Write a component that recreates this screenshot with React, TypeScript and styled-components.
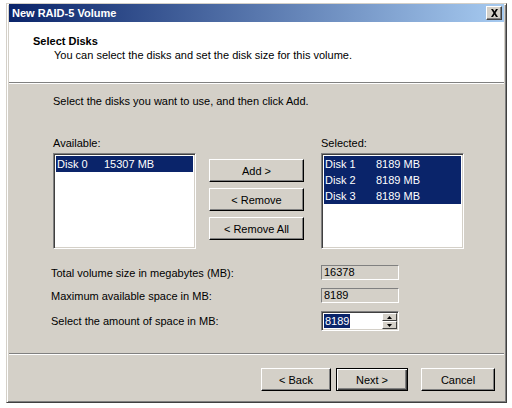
import React from 'react';
import styled, { createGlobalStyle } from 'styled-components';

const GlobalStyle = createGlobalStyle`
  html, body {
    margin: 0;
    padding: 0;
    background: #ffffff;
  }
  body {
    font-family: Tahoma, "Liberation Sans", Arial, sans-serif;
    font-size: 11px;
    color: #000000;
  }
`;

const available = [{ name: 'Disk 0', size: '15307 MB' }];
const selected = [
  { name: 'Disk 1', size: '8189 MB' },
  { name: 'Disk 2', size: '8189 MB' },
  { name: 'Disk 3', size: '8189 MB' },
];

export default function App() {
  return (
    <>
      <GlobalStyle />
      <Window>
        <TitleBar>
          <TitleText>New RAID-5 Volume</TitleText>
          <CloseButton>
            <svg width="9" height="8" viewBox="0 0 9 8">
              <path d="M1 0h2l1.5 2.5L6 0h2L5.5 4 8 8H6L4.5 5.5 3 8H1l2.5-4z" fill="#000" />
            </svg>
          </CloseButton>
        </TitleBar>
        <Header>
          <HeaderTitle>Select Disks</HeaderTitle>
          <HeaderText>You can select the disks and set the disk size for this volume.</HeaderText>
        </Header>
        <Separator />
        <Body>
          <Intro>Select the disks you want to use, and then click Add.</Intro>
          <ListsRow>
            <ListColumn>
              <Label>Available:</Label>
              <ListBox>
                {available.map((d) => (
                  <ListItem key={d.name} $selected>
                    <DiskName>{d.name}</DiskName>
                    <span>{d.size}</span>
                  </ListItem>
                ))}
              </ListBox>
            </ListColumn>
            <ButtonColumn>
              <Button>Add &gt;</Button>
              <Button>&lt; Remove</Button>
              <Button>&lt; Remove All</Button>
            </ButtonColumn>
            <ListColumn $offset={17}>
              <Label>Selected:</Label>
              <ListBox>
                {selected.map((d) => (
                  <ListItem key={d.name} $selected>
                    <DiskName $wide>{d.name}</DiskName>
                    <span>{d.size}</span>
                  </ListItem>
                ))}
              </ListBox>
            </ListColumn>
          </ListsRow>
          <Fields>
            <FieldRow>
              <FieldLabel>Total volume size in megabytes (MB):</FieldLabel>
              <ReadOnlyBox>16378</ReadOnlyBox>
            </FieldRow>
            <FieldRow>
              <FieldLabel>Maximum available space in MB:</FieldLabel>
              <ReadOnlyBox>8189</ReadOnlyBox>
            </FieldRow>
            <FieldRow $tall>
              <FieldLabel>Select the amount of space in MB:</FieldLabel>
              <SpinEdit>
                <SpinValue>8189</SpinValue>
                <SpinButtons>
                  <SpinButton>
                    <svg width="5" height="3" viewBox="0 0 5 3">
                      <path d="M2.5 0L5 3H0z" fill="#000" />
                    </svg>
                  </SpinButton>
                  <SpinButton>
                    <svg width="5" height="3" viewBox="0 0 5 3">
                      <path d="M0 0h5L2.5 3z" fill="#000" />
                    </svg>
                  </SpinButton>
                </SpinButtons>
              </SpinEdit>
            </FieldRow>
          </Fields>
        </Body>
        <Separator />
        <Footer>
          <Button $w={70}>&lt; Back</Button>
          <Button $w={72} $default>Next &gt;</Button>
          <CancelGap />
          <Button $w={74}>Cancel</Button>
        </Footer>
      </Window>
    </>
  );
}

const Window = styled.div`
  margin: 3px 0 0 6px;
  width: 501px;
  height: 400px;
  box-sizing: border-box;
  background: #d4d0c8;
  border-top: 1px solid #d4d0c8;
  border-left: 1px solid #d4d0c8;
  border-right: 1px solid #404040;
  border-bottom: 1px solid #404040;
  box-shadow: inset 1px 1px 0 #ffffff, inset -1px -1px 0 #808080;
  padding: 0 2px 2px 2px;
  display: flex;
  flex-direction: column;
`;

const TitleBar = styled.div`
  height: 18px;
  background: linear-gradient(to right, #0a246a, #a6caf0);
  display: flex;
  align-items: center;
  justify-content: space-between;
  padding: 0 2px 0 3px;
`;

const TitleText = styled.span`
  color: #ffffff;
  font-weight: bold;
  font-size: 11px;
`;

const CloseButton = styled.div`
  width: 16px;
  height: 14px;
  box-sizing: border-box;
  background: #d4d0c8;
  border-top: 1px solid #ffffff;
  border-left: 1px solid #ffffff;
  border-right: 1px solid #404040;
  border-bottom: 1px solid #404040;
  box-shadow: inset -1px -1px 0 #808080;
  display: flex;
  align-items: center;
  justify-content: center;
`;

const Header = styled.div`
  background: #ffffff;
  height: 60px;
  box-sizing: border-box;
  padding: 12px 0 0 24px;
`;

const HeaderTitle = styled.div`
  font-weight: bold;
  font-size: 11px;
  line-height: 14px;
`;

const HeaderText = styled.div`
  padding-left: 21px;
  line-height: 14px;
`;

const Separator = styled.div`
  height: 1px;
  background: #808080;
  border-bottom: 1px solid #ffffff;
`;

const Body = styled.div`
  height: 269px;
  box-sizing: border-box;
  padding: 11px 0 0 42px;
  display: flex;
  flex-direction: column;
`;

const Intro = styled.div`
  padding-left: 2px;
  line-height: 13px;
`;

const ListsRow = styled.div`
  display: flex;
  margin-top: 29px;
  padding-left: 2px;
`;

const ListColumn = styled.div<{ $offset?: number }>`
  display: flex;
  flex-direction: column;
  margin-left: ${(p) => p.$offset ?? 0}px;
`;

const Label = styled.div`
  line-height: 13px;
  height: 13px;
  margin-bottom: 3px;
`;

const ListBox = styled.div`
  width: 143px;
  height: 96px;
  box-sizing: border-box;
  background: #ffffff;
  border-top: 1px solid #808080;
  border-left: 1px solid #808080;
  border-right: 1px solid #ffffff;
  border-bottom: 1px solid #ffffff;
  box-shadow: inset 1px 1px 0 #404040, inset -1px -1px 0 #d4d0c8;
  padding: 2px;
`;

const ListItem = styled.div<{ $selected?: boolean }>`
  display: flex;
  height: 16px;
  align-items: center;
  padding-left: 1px;
  background: ${(p) => (p.$selected ? '#0a246a' : 'transparent')};
  color: ${(p) => (p.$selected ? '#ffffff' : '#000000')};
  white-space: nowrap;
`;

const DiskName = styled.span<{ $wide?: boolean }>`
  width: ${(p) => (p.$wide ? 51 : 47)}px;
`;

const ButtonColumn = styled.div`
  display: flex;
  flex-direction: column;
  gap: 6px;
  margin: 22px 0 0 13px;
`;

const Button = styled.div<{ $w?: number; $default?: boolean }>`
  width: ${(p) => p.$w ?? 95}px;
  height: 23px;
  box-sizing: border-box;
  display: flex;
  align-items: center;
  justify-content: center;
  background: #d4d0c8;
  border-top: 1px solid ${(p) => (p.$default ? '#000000' : '#ffffff')};
  border-left: 1px solid ${(p) => (p.$default ? '#000000' : '#ffffff')};
  border-right: 1px solid #000000;
  border-bottom: 1px solid #000000;
  box-shadow: ${(p) =>
    p.$default
      ? 'inset 1px 1px 0 #ffffff, inset -1px -1px 0 #404040, inset -2px -2px 0 #808080'
      : 'inset -1px -1px 0 #808080'};
  white-space: nowrap;
`;

const Fields = styled.div`
  display: flex;
  flex-direction: column;
  margin-top: 16px;
  gap: 8px;
`;

const FieldRow = styled.div<{ $tall?: boolean }>`
  display: flex;
  align-items: center;
  height: ${(p) => (p.$tall ? 20 : 15)}px;
`;

const FieldLabel = styled.div`
  width: 270px;
`;

const ReadOnlyBox = styled.div`
  width: 78px;
  height: 15px;
  box-sizing: border-box;
  border-top: 1px solid #808080;
  border-left: 1px solid #808080;
  border-right: 1px solid #ffffff;
  border-bottom: 1px solid #ffffff;
  padding-left: 2px;
  line-height: 13px;
`;

const SpinEdit = styled.div`
  width: 78px;
  height: 20px;
  box-sizing: border-box;
  background: #ffffff;
  border-top: 1px solid #808080;
  border-left: 1px solid #808080;
  border-right: 1px solid #ffffff;
  border-bottom: 1px solid #ffffff;
  box-shadow: inset 1px 1px 0 #404040, inset -1px -1px 0 #d4d0c8;
  display: flex;
  align-items: center;
  justify-content: space-between;
  padding: 2px 1px 2px 2px;
`;

const SpinValue = styled.span`
  background: #0a246a;
  color: #ffffff;
  line-height: 14px;
  padding: 0 1px;
`;

const SpinButtons = styled.div`
  display: flex;
  flex-direction: column;
  width: 15px;
  height: 16px;
`;

const SpinButton = styled.div`
  flex: 1;
  box-sizing: border-box;
  background: #d4d0c8;
  border-top: 1px solid #ffffff;
  border-left: 1px solid #ffffff;
  border-right: 1px solid #404040;
  border-bottom: 1px solid #404040;
  display: flex;
  align-items: center;
  justify-content: center;
`;

const Footer = styled.div`
  flex: 1;
  display: flex;
  align-items: flex-start;
  justify-content: flex-end;
  gap: 5px;
  padding: 13px 9px 0 0;
`;

const CancelGap = styled.div`
  width: 3px;
`;
